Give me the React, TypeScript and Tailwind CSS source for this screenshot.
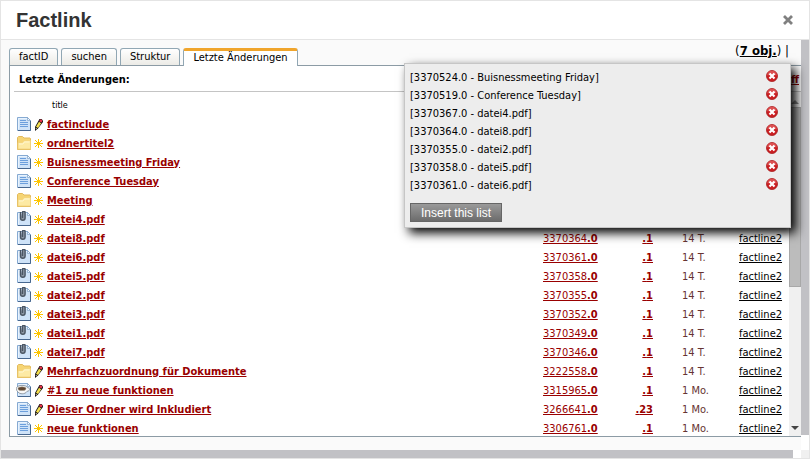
import type { ReactNode } from "react";

type Kind = "doc" | "folder" | "file" | "cup";

interface Entry {
  kind: Kind;
  edited?: boolean;
  title: string;
  id: string;
  version: string;
  age: string;
}

const entries: Entry[] = [
  { kind: "doc", edited: true, title: "factinclude", id: "3370530", version: "1", age: "14 T." },
  { kind: "folder", title: "ordnertitel2", id: "3370527", version: "1", age: "14 T." },
  { kind: "doc", title: "Buisnessmeeting Friday", id: "3370524", version: "1", age: "14 T." },
  { kind: "doc", title: "Conference Tuesday", id: "3370519", version: "1", age: "14 T." },
  { kind: "folder", title: "Meeting", id: "3370516", version: "1", age: "14 T." },
  { kind: "file", title: "datei4.pdf", id: "3370367", version: "1", age: "14 T." },
  { kind: "file", title: "datei8.pdf", id: "3370364", version: "1", age: "14 T." },
  { kind: "file", title: "datei6.pdf", id: "3370361", version: "1", age: "14 T." },
  { kind: "file", title: "datei5.pdf", id: "3370358", version: "1", age: "14 T." },
  { kind: "file", title: "datei2.pdf", id: "3370355", version: "1", age: "14 T." },
  { kind: "file", title: "datei3.pdf", id: "3370352", version: "1", age: "14 T." },
  { kind: "file", title: "datei1.pdf", id: "3370349", version: "1", age: "14 T." },
  { kind: "file", title: "datei7.pdf", id: "3370346", version: "1", age: "14 T." },
  { kind: "folder", edited: true, title: "Mehrfachzuordnung für Dokumente", id: "3222558", version: "1", age: "14 T." },
  { kind: "cup", edited: true, title: "#1 zu neue funktionen", id: "3315965", version: "1", age: "1 Mo." },
  { kind: "doc", edited: true, title: "Dieser Ordner wird Inkludiert", id: "3266641", version: "23", age: "1 Mo." },
  { kind: "doc", title: "neue funktionen", id: "3306761", version: "1", age: "1 Mo." },
];

const picked = [
  "[3370524.0 - Buisnessmeeting Friday]",
  "[3370519.0 - Conference Tuesday]",
  "[3370367.0 - datei4.pdf]",
  "[3370364.0 - datei8.pdf]",
  "[3370355.0 - datei2.pdf]",
  "[3370358.0 - datei5.pdf]",
  "[3370361.0 - datei6.pdf]",
];

function Page() {
  return (
    <>
      <path d="M1.5 1.5h10l3 3v10h-13z" fill="#cfe3f8" stroke="#86aad2" />
      <path d="M2 14.500h12.500V5" fill="none" stroke="#47678f" />
      <path d="M2.500 13.500v-11h8.500" fill="none" stroke="#e8f3fe" />
      <path d="M11.500 1.500v3h3z" fill="#f8fbff" stroke="#6d93bd" strokeWidth=".6" />
    </>
  );
}

function KindIcon({ kind }: { kind: Kind }) {
  return (
    <svg className="block size-4" viewBox="0 0 16 16" aria-hidden="true">
      {kind === "doc" && (
        <>
          <Page />
          <path d="M4 4.500h6M4 6.500h8M4 8.500h8M4 10.500h8" stroke="#6c9fdc" />
        </>
      )}
      {kind === "file" && (
        <>
          <Page />
          <path
            d="M4.500 1v6a2.300 2.300 0 0 0 4.600 0V1.500a1.300 1.300 0 0 0-2.600 0V7"
            fill="#8e99a6"
            stroke="#4a5562"
            strokeWidth="1.400"
          />
        </>
      )}
      {kind === "cup" && (
        <>
          <Page />
          <path
            d="M.4 6.500c0-2 2.500-3.100 5.600-3.100 2.800 0 5 .9 5.500 2.300 3 .2 2.800 3.300-.4 3.600-1 1.700-3 2.500-5 2.500-3.200 0-5.700-2.300-5.700-5.300z"
            fill="#f8f8f8"
            stroke="#808a94"
            strokeWidth=".8"
          />
          <ellipse cx="6" cy="6.700" rx="4" ry="1.900" fill="#5f4630" stroke="#a79a8c" strokeWidth=".5" />
        </>
      )}
      {kind === "folder" && (
        <>
          <path d="M1.500 14.500v-12l1-1h4l1.500 1.500h6l.5.5v11z" fill="#f6d574" stroke="#e2b95c" />
          <path d="M2 14V7.500h4.500L8 5.500h6.500V14z" fill="#fdeaa4" stroke="#f3d27a" strokeWidth=".8" />
          <path d="M3 9h4l1.500-2h5" fill="none" stroke="#fff6cf" />
        </>
      )}
    </svg>
  );
}

function Star() {
  return (
    <svg className="block size-[9px]" viewBox="0 0 9 9" role="img" aria-label="neu">
      <path d="M4.500 0v9M0 4.500h9M1 1l7 7M8 1L1 8" stroke="#fdc500" />
    </svg>
  );
}

function Pencil() {
  return (
    <svg className="block h-3 w-[9px]" viewBox="0 0 9 12" role="img" aria-label="bearbeitet">
      <path d="M5.500 0h2l1.500 1.500v1.500L4 9.500 1 12v-4z" fill="#111" />
      <path d="M5 2.800l2.200 1.400L4 9l-2-1.200z" fill="#f6e04c" />
      <path d="M6 .6h1.400l1.100 1.100-1 1.900L5.200 2.200z" fill="#e8344c" />
      <path d="M1.500 8.500L3 9.600l-1 .9z" fill="#f3dcc0" />
    </svg>
  );
}

function RemoveIcon() {
  return (
    <svg className="block size-3" viewBox="0 0 12 12" aria-hidden="true">
      <circle cx="6" cy="6" r="5.500" fill="#cb1f22" stroke="#a81a1c" strokeWidth=".8" />
      <path d="M1.200 5.500a4.800 4.800 0 0 1 9.600 0c-3-1-6.600-1-9.600 0z" fill="#dc5051" />
      <path d="M3.500 3.500l5 5M8.500 3.500l-5 5" stroke="#fff" strokeWidth="2.200" />
    </svg>
  );
}

function Tab({ active, children }: { active?: boolean; children: ReactNode }) {
  return active ? (
    <button className="relative z-10 -mb-px h-[18px] rounded-t-[3px] border border-t-[3px] border-b-0 border-[#91a7b4] border-t-[#f0a52c] bg-white px-[9px] pb-[2px] leading-3">
      {children}
    </button>
  ) : (
    <button className="h-[17px] rounded-t-[3px] border border-b-0 border-[#91a7b4] bg-linear-to-b from-white to-[#ecebe6] px-[9px] leading-4">
      {children}
    </button>
  );
}

export default function App() {
  return (
    <div className="flex h-screen flex-col overflow-hidden border border-[#e4e4e4] bg-[#fafafa] font-['DejaVu_Sans_Condensed','DejaVu_Sans',sans-serif] text-[11px] text-black">
      <header className="flex h-[39px] shrink-0 items-center justify-between border-b border-[#e4e4e4] bg-white pr-4 pl-[15px]">
        <h1 className="font-['Liberation_Sans',sans-serif] text-xl font-bold text-[#333]">Factlink</h1>
        <button className="text-[#808080]" aria-label="Schließen">
          <svg className="block size-[10px]" viewBox="0 0 10 10" aria-hidden="true">
            <path d="M1 1l8 8M9 1L1 9" stroke="currentColor" strokeWidth="2.800" />
          </svg>
        </button>
      </header>

      <div className="flex min-h-0 flex-1">
        <div className="flex min-w-0 flex-1 flex-col">
          <main className="relative flex min-h-0 flex-1 flex-col pb-[13px] pl-2">
            <div className="flex h-[25px] shrink-0 items-end justify-between">
              <nav className="flex items-end gap-[3px]">
                <Tab>factID</Tab>
                <Tab>suchen</Tab>
                <Tab>Struktur</Tab>
                <Tab active>Letzte Änderungen</Tab>
              </nav>
              <p className="self-start pt-[3px] pr-3 text-[13px] leading-4">
                (<a href="#objekte" className="font-bold underline">7 obj.</a>) |
              </p>
            </div>

            <section className="flex min-h-0 flex-1 flex-col border border-r-0 border-[#8c9ba5] bg-white pl-1">
              <div className="flex h-[26px] shrink-0 items-center justify-between border-b border-[#c4c4c4] pt-[3px] pr-[2px] pl-[5px]">
                <h2 className="font-bold">Letzte Änderungen:</h2>
                <a href="#betreff" className="font-bold text-[#900] underline">Betreff</a>
              </div>
              <div className="flex min-h-0 flex-1">
                <div className="min-w-0 flex-1 overflow-hidden">
                  <table className="w-full table-fixed border-collapse">
                    <colgroup>
                      <col className="w-5" />
                      <col className="w-[13px]" />
                      <col />
                      <col className="w-14" />
                      <col className="w-[82px]" />
                      <col className="w-[58px]" />
                      <col className="w-[50px]" />
                    </colgroup>
                    <thead>
                      <tr className="h-[23px] text-[9px]">
                        <td />
                        <td />
                        <th scope="col" className="pt-1 pl-[5px] text-left font-normal">title</th>
                        <td colSpan={4} />
                      </tr>
                    </thead>
                    <tbody>
                      {entries.map((e) => (
                        <tr key={e.id} className="h-[19px] leading-[14px] whitespace-nowrap text-[#900]">
                          <td className="pb-px pl-[2px]"><KindIcon kind={e.kind} /></td>
                          <td>{e.edited ? <Pencil /> : <Star />}</td>
                          <td><a href={`#${e.id}`} className="font-bold underline">{e.title}</a></td>
                          <td>
                            <a href={`#${e.id}`} className="underline">{e.id}<b>.0</b></a>
                          </td>
                          <td className="pr-7 text-right">
                            <a href={`#${e.id}.${e.version}`} className="font-bold underline">.{e.version}</a>
                          </td>
                          <td className="pl-px text-[#633]">{e.age}</td>
                          <td><a href="#factline2" className="text-black underline">factline2</a></td>
                        </tr>
                      ))}
                    </tbody>
                  </table>
                </div>
                <div className="flex w-3 shrink-0 flex-col items-center bg-[#f0f0f0]" aria-hidden="true">
                  <svg className="h-[15px] w-2" viewBox="0 0 8 15"><path d="M0 12h8L4 8z" fill="#888" /></svg>
                  <div className="h-[180px] w-full border border-[#a8a8a8] bg-[#bcbcbc]" />
                  <svg className="mt-auto h-[15px] w-2" viewBox="0 0 8 15"><path d="M0 5h8L4 9z" fill="#444" /></svg>
                </div>
              </div>
            </section>

            <aside className="absolute top-[23px] right-[10px] z-20 w-[387px] border border-[#c6c6c6] bg-[#ededed] p-[5px] shadow-[5px_5px_10px_#000]">
              <ul>
                {picked.map((item) => (
                  <li key={item} className="flex h-[18px] items-center justify-between pr-[7px]">
                    <span className="pt-px">{item}</span>
                    <button className="pb-1" aria-label={`${item} entfernen`}><RemoveIcon /></button>
                  </li>
                ))}
              </ul>
              <button className="mt-2 block h-[19px] border border-[#666] bg-linear-to-b from-[#9a9a9a] to-[#6c6c6c] px-[10px] font-['Liberation_Sans',sans-serif] text-xs leading-4 text-white">
                Insert this list
              </button>
            </aside>
          </main>
          <div className="h-2 shrink-0 bg-white pr-2" aria-hidden="true">
            <div className="h-full bg-[#c1c1c5]" />
          </div>
        </div>
        <div className="flex w-2 shrink-0 flex-col bg-white" aria-hidden="true">
          <div className="mb-[15px] flex-1 bg-[#c1c1c5]" />
          <div className="h-2 bg-[#f0f0f0]" />
        </div>
      </div>
    </div>
  );
}
